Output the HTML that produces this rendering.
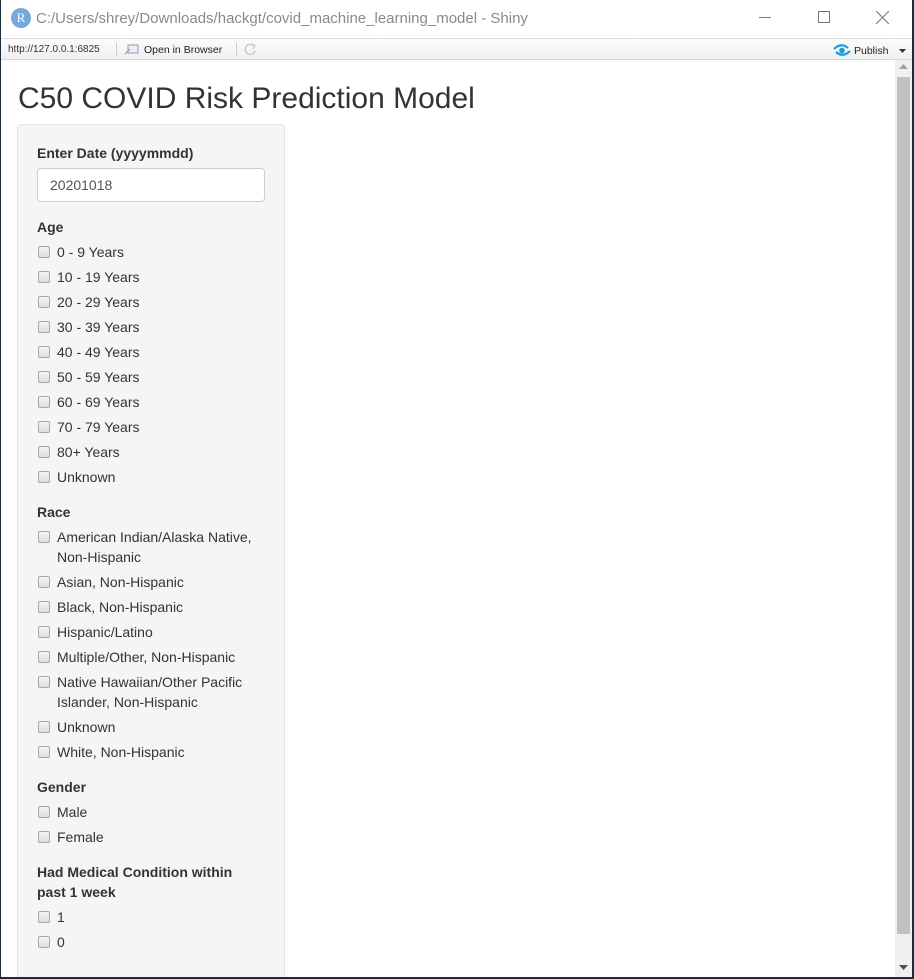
<!DOCTYPE html>
<html><head><meta charset="utf-8"><style>
*{box-sizing:border-box;margin:0;padding:0}
html,body{width:914px;height:979px;overflow:hidden}
body{background:#1c2b3a;font-family:"Liberation Sans",Arial,sans-serif;position:relative}
#win{position:absolute;left:1px;top:0;width:911px;height:977px;background:#fff;overflow:hidden}
.t{position:absolute;white-space:nowrap}
#title{position:absolute;left:0;top:0;width:911px;height:38px;background:#fff}
#tb{position:absolute;left:0;top:38px;width:911px;height:22px;background:linear-gradient(#fbfbfb,#f0f0f0);border-top:1px solid #dcdcdc;border-bottom:1px solid #d6d6d6}
.sep{position:absolute;top:4px;width:1px;height:13px;background:#ccc}
#panel{position:absolute;left:16px;top:124px;width:268px;height:870px;background:#f5f5f5;border:1px solid #e3e3e3;border-radius:4px}
.lbl{position:absolute;left:36px;font-weight:bold;font-size:14px;color:#333;line-height:20px}
.cb{position:absolute;left:37px;width:12px;height:12px;border:1px solid #a9a9a9;border-radius:2px;background:linear-gradient(#f4f4f4,#dedede)}
.ct{position:absolute;left:56px;font-size:14px;color:#333;line-height:20px;white-space:nowrap}
#sb{position:absolute;left:894px;top:60px;width:17px;height:917px;background:#f0f0f0}
</style></head><body>
<div id="win">
<div id="title">
 <div style="position:absolute;left:10px;top:8px;width:20px;height:20px;border-radius:50%;background:#75a9dc;color:#fff;font-family:'Liberation Serif',serif;font-size:13px;text-align:center;line-height:20px">R</div>
 <div class="t" style="left:35px;top:10px;font-size:15px;color:#8a8a8a">C:/Users/shrey/Downloads/hackgt/covid_machine_learning_model - Shiny</div>
 <div style="position:absolute;left:758px;top:17px;width:12px;height:1px;background:#777"></div>
 <div style="position:absolute;left:817px;top:11px;width:12px;height:12px;border:1px solid #777"></div>
 <svg style="position:absolute;left:875px;top:11px" width="13" height="13"><path d="M0 0L13 13M13 0L0 13" stroke="#777" stroke-width="1.1"/></svg>
</div>
<div id="tb">
 <div class="t" style="left:7px;top:5px;font-size:10px;color:#333">http://127.0.0.1:6825</div>
 <div class="sep" style="left:115px"></div>
 <svg style="position:absolute;left:123px;top:4px" width="16" height="13"><rect x="4" y="2" width="10" height="8" fill="#e8eef5" stroke="#99a" stroke-width="1"/><path d="M1 11L6 6" stroke="#99a"/></svg>
 <div class="t" style="left:143px;top:5px;font-size:10.5px;color:#222">Open in Browser</div>
 <div class="sep" style="left:235px"></div>
 <svg style="position:absolute;left:242px;top:3px" width="14" height="14"><path d="M11 4A5 5 0 1 0 12 9" fill="none" stroke="#ccc" stroke-width="1.5"/><path d="M9 2L12 4L10 7" fill="none" stroke="#ccc" stroke-width="1.2"/></svg>
 <svg style="position:absolute;left:832px;top:4px" width="18" height="14"><path d="M1 6Q8 -1 15 5" fill="none" stroke="#1a9be0" stroke-width="2.2"/><path d="M3 9Q10 15 17 8" fill="none" stroke="#1a9be0" stroke-width="2.2"/><circle cx="9" cy="7.5" r="2.8" fill="#1a9be0"/></svg>
 <div class="t" style="left:853px;top:6px;font-size:10.5px;color:#222">Publish</div>
 <svg style="position:absolute;left:898px;top:10px" width="7" height="5"><path d="M0 0H7L3.5 4Z" fill="#333"/></svg>
</div>
<div class="t" style="left:17px;top:82px;font-size:30px;color:#333">C50 COVID Risk Prediction Model</div>
<div id="panel"></div>
<div class="lbl" style="top:143px">Enter Date (yyyymmdd)</div>
<div style="position:absolute;left:36px;top:168px;width:228px;height:34px;background:#fff;border:1px solid #ccc;border-radius:4px;font-size:14px;color:#555;padding:7px 12px;line-height:18px">20201018</div>
<div class="lbl" style="top:217px">Age</div>
<div class="cb" style="top:246px"></div><div class="ct" style="top:242px">0 - 9 Years</div>
<div class="cb" style="top:271px"></div><div class="ct" style="top:267px">10 - 19 Years</div>
<div class="cb" style="top:296px"></div><div class="ct" style="top:292px">20 - 29 Years</div>
<div class="cb" style="top:321px"></div><div class="ct" style="top:317px">30 - 39 Years</div>
<div class="cb" style="top:346px"></div><div class="ct" style="top:342px">40 - 49 Years</div>
<div class="cb" style="top:371px"></div><div class="ct" style="top:367px">50 - 59 Years</div>
<div class="cb" style="top:396px"></div><div class="ct" style="top:392px">60 - 69 Years</div>
<div class="cb" style="top:421px"></div><div class="ct" style="top:417px">70 - 79 Years</div>
<div class="cb" style="top:446px"></div><div class="ct" style="top:442px">80+ Years</div>
<div class="cb" style="top:471px"></div><div class="ct" style="top:467px">Unknown</div>
<div class="lbl" style="top:502px">Race</div>
<div class="cb" style="top:531px"></div><div class="ct" style="top:527px">American Indian/Alaska Native,<br>Non-Hispanic</div>
<div class="cb" style="top:576px"></div><div class="ct" style="top:572px">Asian, Non-Hispanic</div>
<div class="cb" style="top:601px"></div><div class="ct" style="top:597px">Black, Non-Hispanic</div>
<div class="cb" style="top:626px"></div><div class="ct" style="top:622px">Hispanic/Latino</div>
<div class="cb" style="top:651px"></div><div class="ct" style="top:647px">Multiple/Other, Non-Hispanic</div>
<div class="cb" style="top:676px"></div><div class="ct" style="top:672px">Native Hawaiian/Other Pacific<br>Islander, Non-Hispanic</div>
<div class="cb" style="top:721px"></div><div class="ct" style="top:717px">Unknown</div>
<div class="cb" style="top:746px"></div><div class="ct" style="top:742px">White, Non-Hispanic</div>
<div class="lbl" style="top:777px">Gender</div>
<div class="cb" style="top:806px"></div><div class="ct" style="top:802px">Male</div>
<div class="cb" style="top:831px"></div><div class="ct" style="top:827px">Female</div>
<div class="lbl" style="top:862px">Had Medical Condition within<br>past 1 week</div>
<div class="cb" style="top:911px"></div><div class="ct" style="top:907px">1</div>
<div class="cb" style="top:936px"></div><div class="ct" style="top:932px">0</div>
<div id="sb">
 <svg style="position:absolute;left:4px;top:4px" width="9" height="5"><path d="M0 5H9L4.5 0Z" fill="#a0a0a0"/></svg>
 <div style="position:absolute;left:2px;top:17px;width:13px;height:857px;background:#c1c1c1"></div>
 <svg style="position:absolute;left:4px;top:905px" width="9" height="5"><path d="M0 0H9L4.5 5Z" fill="#505050"/></svg>
</div>
</div>
</body></html>
